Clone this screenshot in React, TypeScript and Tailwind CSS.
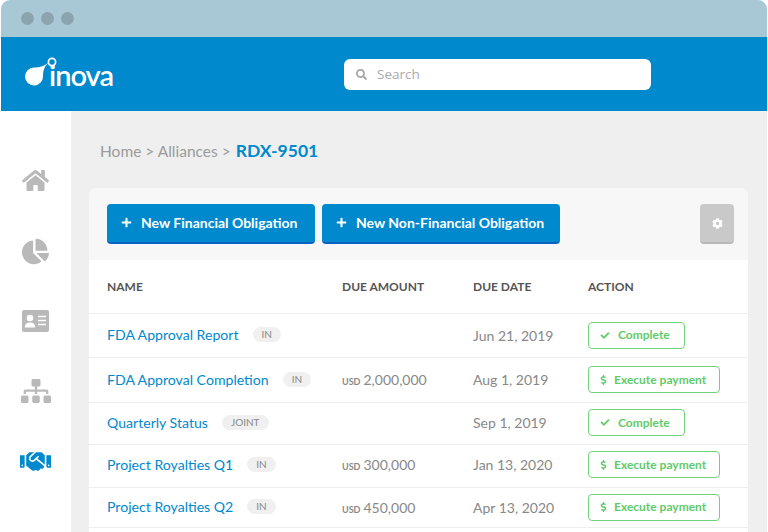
import { FaHome, FaChartPie, FaSitemap, FaHandshake, FaSearch, FaCog, FaCheck, FaDollarSign, FaPlus } from 'react-icons/fa';

function IdCardIcon() {
  return (
    <svg width="27" height="22" viewBox="0 0 27 22" className="text-[#b9b9b9]">
      <rect width="27" height="22" rx="2" fill="currentColor" />
      <circle cx="8" cy="8" r="3.300" fill="#fff" />
      <path d="M2.800 17.500c0-3.500 2-5 5.200-5s5.200 1.500 5.200 5z" fill="#fff" />
      <path d="M16 6.500h8M16 10.500h8M16 14.500h8" stroke="#fff" strokeWidth="1.400" />
    </svg>
  );
}

const rows = [
  { name: 'FDA Approval Report', tag: 'IN', amount: '', date: 'Jun 21, 2019', action: 'Complete', height: 'h-[44px] pb-[1px]' },
  { name: 'FDA Approval Completion', tag: 'IN', amount: '2,000,000', date: 'Aug 1, 2019', action: 'Execute payment', height: 'h-[45px] pb-[1px]' },
  { name: 'Quarterly Status', tag: 'JOINT', amount: '', date: 'Sep 1, 2019', action: 'Complete', height: 'h-[42px] pb-[2px]' },
  { name: 'Project Royalties Q1', tag: 'IN', amount: '300,000', date: 'Jan 13, 2020', action: 'Execute payment', height: 'h-[43px] pb-[3px]' },
  { name: 'Project Royalties Q2', tag: 'IN', amount: '450,000', date: 'Apr 13, 2020', action: 'Execute payment', height: 'h-[40px] pb-[1px]' },
];

function Logo() {
  return (
    <div className="relative w-[319px] h-[40px] shrink-0">
      <span className="absolute left-[24px] top-[3px] text-[29px] leading-[36px] tracking-[-1px] font-semibold text-white">inova</span>
      <svg width="40" height="40" viewBox="0 0 40 40" className="absolute left-0 top-0">
        <path d="M9 13.500C14 13.500 19 12.500 23.500 8.500C20.500 11.500 18 15 18 22A9 9 0 1 1 9 13.500Z" fill="#fff" />
        <circle cx="27" cy="8" r="3.600" fill="#0089cd" stroke="#fff" strokeWidth="1.700" />
      </svg>
    </div>
  );
}

function ActionButton({ label }: { label: string }) {
  const complete = label === 'Complete';
  return (
    <button className={`flex items-center h-[27px] border border-[#72d27c] rounded-[4px] text-[#5fcb69] text-[12px] font-bold bg-white ${complete ? 'w-[97px] pl-[11px] gap-[8px]' : 'w-[132px] pl-[10px] gap-[6px]'}`}>
      {complete ? <FaCheck className="w-[10px] h-[9px]" /> : <FaDollarSign className="w-[9px] h-[10px]" />}
      {label}
    </button>
  );
}

export default function App() {
  return (
    <div className="w-[768px] h-[532px] overflow-hidden bg-white px-px font-['Lato',sans-serif]">
      {/* Window chrome */}
      <div className="h-[37px] bg-[#a9c8d6] rounded-t-[9px] flex items-center gap-[7px] pl-[20px]">
        <span className="w-[13px] h-[13px] rounded-full bg-[#8ba4af]" />
        <span className="w-[13px] h-[13px] rounded-full bg-[#8ba4af]" />
        <span className="w-[13px] h-[13px] rounded-full bg-[#8ba4af]" />
      </div>

      {/* Header */}
      <div className="h-[74px] bg-[#0089cd] flex items-center pl-[24px]">
        <Logo />
        <div className="w-[307px] h-[31px] bg-white rounded-[6px] flex items-center pl-[12px] gap-[10px]">
          <FaSearch className="w-[11px] h-[11px] text-[#a5a5a5]" />
          <span className="text-[13.500px] text-[#aaaaaa] font-['Open_Sans',sans-serif]">Search</span>
        </div>
      </div>

      <div className="flex h-[421px]">
        {/* Sidebar */}
        <div className="w-[70px] shrink-0 bg-white flex flex-col items-center pt-[34px] pr-[1px]">
          <div className="h-[70px] flex items-center justify-center"><FaHome size={27} className="text-[#b9b9b9]" /></div>
          <div className="h-[70px] flex items-center justify-center pt-[2px]"><FaChartPie size={27} className="text-[#b9b9b9]" /></div>
          <div className="h-[70px] flex items-center justify-center pt-[2px]"><IdCardIcon /></div>
          <div className="h-[70px] flex items-center justify-center pt-[2px]"><FaSitemap size={30} className="text-[#b9b9b9]" /></div>
          <div className="h-[70px] flex items-center justify-center pt-[3px]"><FaHandshake size={31} className="text-[#0089cd]" /></div>
        </div>

        {/* Main */}
        <div className="flex-1 bg-[#efefef] pl-[18px] pr-[19px]">
          <div className="h-[77px] pl-[11px] pt-[27px] flex items-start">
            <div className="flex items-baseline h-[24px] text-[15.500px] text-[#9b9b9b]">
              <span className="whitespace-pre">Home &gt; Alliances &gt; </span>
              <span className="text-[17.500px] font-bold text-[#0089cd] ml-px">RDX-9501</span>
            </div>
          </div>

          <div className="rounded-t-[8px] overflow-hidden bg-white h-[344px]">
            <div className="h-[72px] bg-[#f7f7f7] flex items-start pt-[16px] pl-[18px] pr-[14px] gap-[7px]">
              <button className="w-[208px] h-[40px] pb-[1px] rounded-[4px] bg-[#0089cd] border-b-2 border-[#0b62c2] flex items-center pl-[14px] gap-[9px] text-white text-[14px] font-bold">
                <FaPlus className="w-[11px] h-[11px]" />
                New Financial Obligation
              </button>
              <button className="w-[238px] h-[40px] pb-[1px] rounded-[4px] bg-[#0089cd] border-b-2 border-[#0b62c2] flex items-center pl-[14px] gap-[9px] text-white text-[14px] font-bold">
                <FaPlus className="w-[11px] h-[11px]" />
                New Non-Financial Obligation
              </button>
              <button className="ml-auto w-[34px] h-[40px] rounded-[4px] bg-[#c9c9c9] border-b-2 border-[#b8b8b8] flex items-center justify-center text-white">
                <FaCog className="w-[11px] h-[11px]" />
              </button>
            </div>

            <div className="h-[54px] grid grid-cols-[235px_131px_115px_1fr] items-center pl-[18px] border-b border-[#eeeeee] text-[12px] font-bold text-[#555555]">
              <div>NAME</div>
              <div>DUE AMOUNT</div>
              <div>DUE DATE</div>
              <div>ACTION</div>
            </div>

            {rows.map((row) => (
              <div key={row.name} className={`${row.height} grid grid-cols-[235px_131px_115px_1fr] items-center pl-[18px] border-b border-[#eeeeee]`}>
                <div className="flex items-center gap-[14px]">
                  <span className="text-[14.100px] text-[#0089cd] whitespace-nowrap">{row.name}</span>
                  <span className="h-[15px] px-[9px] rounded-full bg-[#f0f0f0] text-[10px] leading-[15px] text-[#888888]">{row.tag}</span>
                </div>
                <div className="text-[14px] text-[#888888]">
                  {row.amount && (
                    <>
                      <span className="text-[9px] font-bold text-[#888888] mr-[3px]">USD</span>
                      {row.amount}
                    </>
                  )}
                </div>
                <div className="text-[14px] text-[#888888]">{row.date}</div>
                <ActionButton label={row.action} />
              </div>
            ))}
          </div>
        </div>
      </div>
    </div>
  );
}
